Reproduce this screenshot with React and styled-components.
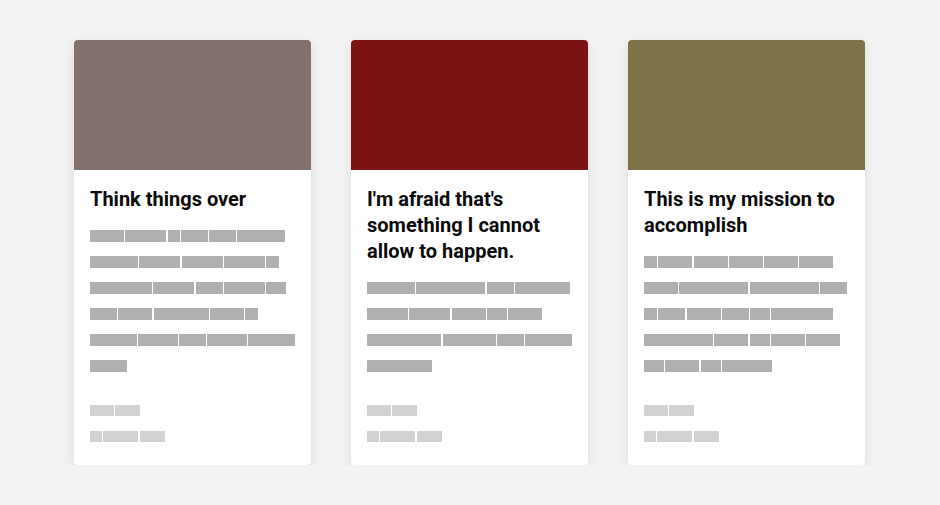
import React from "react";
import styled, { createGlobalStyle } from "styled-components";

const GlobalStyle = createGlobalStyle`
    body {
        margin: 0;
        background: #f3f3f3;
        font-family: Roboto, "Liberation Sans", Arial, sans-serif;
    }
`;

const Page = styled.div`
    display: flex;
    justify-content: center;
    align-items: stretch;
    gap: 40px;
    padding: 40px 1px 0 0;
`;

const Card = styled.div`
    display: flex;
    flex-direction: column;
    width: 237px;
    background: #ffffff;
    border-radius: 4px;
    overflow: hidden;
    box-shadow: 0 4px 12px rgba(0, 0, 0, 0.1);
`;

const Cover = styled.div`
    height: 130px;
    background: ${props => props.$color};
`;

const Body = styled.div`
    flex: 1;
    display: flex;
    flex-direction: column;
    padding: 16px 16px 23px;
`;

const Title = styled.h2`
    margin: 0 0 18px;
    font-size: 20px;
    line-height: 26px;
    font-weight: 700;
    color: #0a0a0a;
`;

const Lines = styled.div`
    display: flex;
    flex-direction: column;
    gap: ${props => props.$gap}px;
`;

const Line = styled.div`
    display: flex;
    gap: 1.3px;
`;

const Word = styled.span`
    display: block;
    width: ${props => props.$w}px;
    height: ${props => props.$h}px;
    background: ${props => props.$color};
`;

const Footer = styled(Lines)`
    margin-top: auto;
    padding-top: 33px;
`;

const cards = [
    {
        color: "#837170",
        title: "Think things over",
        lines: [
            [34, 41, 12, 27, 27, 48],
            [48, 41, 41, 41, 13],
            [62, 41, 27, 41, 20],
            [27, 34, 55, 34, 13],
            [48, 41, 27, 41, 48],
            [37]
        ]
    },
    {
        color: "#7a1414",
        title: "I'm afraid that's something I cannot allow to happen.",
        lines: [
            [48, 69, 27, 55],
            [41, 41, 34, 20, 34],
            [76, 55, 27, 48],
            [65]
        ]
    },
    {
        color: "#7f7248",
        title: "This is my mission to accomplish",
        lines: [
            [13, 34, 34, 34, 34, 34],
            [34, 69, 69, 27],
            [13, 27, 34, 27, 20, 62],
            [69, 34, 20, 34, 34],
            [20, 34, 20, 50]
        ]
    }
];

const footerLines = [
    [24, 25],
    [12, 35, 25]
];

const Skeleton = ({ lines, height, color }) =>
    lines.map((words, i) => (
        <Line key={i}>
            {words.map((w, j) => (
                <Word key={j} $w={w} $h={height} $color={color} />
            ))}
        </Line>
    ));

export default function App() {
    return (
        <>
            <GlobalStyle />
            <Page>
                {cards.map(card => (
                    <Card key={card.title}>
                        <Cover $color={card.color} />
                        <Body>
                            <Title>{card.title}</Title>
                            <Lines $gap={14}>
                                <Skeleton lines={card.lines} height={12} color="#b0b0b0" />
                            </Lines>
                            <Footer $gap={15}>
                                <Skeleton lines={footerLines} height={11} color="#d2d2d2" />
                            </Footer>
                        </Body>
                    </Card>
                ))}
            </Page>
        </>
    );
}
